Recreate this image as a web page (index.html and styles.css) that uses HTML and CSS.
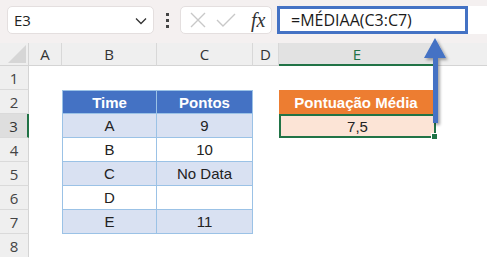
FILE: index.html
```html
<!DOCTYPE html>
<html lang="pt">

<head>
    <meta charset="UTF-8">
    <title>Planilha - MÉDIAA</title>
    <link rel="stylesheet" href="styles.css">
</head>

<body>
    <div class="window">
        <!-- barra de fórmulas -->
        <div class="toolbar">
            <div class="name-box">
                <span>E3</span>
                <svg class="chevron" width="12" height="8" viewBox="0 0 12 8"><path d="M1 1.5 L6 6.5 L11 1.5" fill="none" stroke="#333" stroke-width="1.3"/></svg>
            </div>
            <div class="grip"><i></i><i></i><i></i></div>
            <div class="fx-box">
                <svg width="18" height="18" viewBox="0 0 18 18"><path d="M2 2 L16 16 M16 2 L2 16" stroke="#c8c8c8" stroke-width="1.4"/></svg>
                <svg width="20" height="18" viewBox="0 0 20 18"><path d="M1 9 L7 15 L19 3" fill="none" stroke="#c8c8c8" stroke-width="1.4"/></svg>
                <span class="fx">fx</span>
            </div>
            <div class="formula">
                <div class="formula-text">=MÉDIAA(C3:C7)</div>
            </div>
        </div>

        <!-- grade da planilha -->
        <div class="sheet">
            <div class="corner"><svg width="18" height="18" viewBox="0 0 18 18"><path d="M18 0 L18 18 L0 18 Z" fill="#d6d6d6"/></svg></div>
            <div class="col-head">A</div>
            <div class="col-head">B</div>
            <div class="col-head">C</div>
            <div class="col-head">D</div>
            <div class="col-head active">E</div>
            <div class="col-head last"></div>

            <div class="row-head">1</div>
            <div class="cell"></div><div class="cell"></div><div class="cell"></div><div class="cell"></div><div class="cell"></div><div class="cell"></div>

            <div class="row-head">2</div>
            <div class="cell"></div>
            <div class="cell th first top">Time</div>
            <div class="cell th top">Pontos</div>
            <div class="cell"></div>
            <div class="cell orange-head">Pontuação Média</div>
            <div class="cell"></div>

            <div class="row-head active">3</div>
            <div class="cell"></div>
            <div class="cell td band first">A</div>
            <div class="cell td band">9</div>
            <div class="cell"></div>
            <div class="cell result">7,5<span class="handle"></span></div>
            <div class="cell"></div>

            <div class="row-head">4</div>
            <div class="cell"></div>
            <div class="cell td first">B</div>
            <div class="cell td">10</div>
            <div class="cell"></div><div class="cell"></div><div class="cell"></div>

            <div class="row-head">5</div>
            <div class="cell"></div>
            <div class="cell td band first">C</div>
            <div class="cell td band">No Data</div>
            <div class="cell"></div><div class="cell"></div><div class="cell"></div>

            <div class="row-head">6</div>
            <div class="cell"></div>
            <div class="cell td first">D</div>
            <div class="cell td"></div>
            <div class="cell"></div><div class="cell"></div><div class="cell"></div>

            <div class="row-head">7</div>
            <div class="cell"></div>
            <div class="cell td band first">E</div>
            <div class="cell td band">11</div>
            <div class="cell"></div><div class="cell"></div><div class="cell"></div>

            <div class="row-head">8</div>
            <div class="cell"></div><div class="cell"></div><div class="cell"></div><div class="cell"></div><div class="cell"></div><div class="cell"></div>
        </div>

        <!-- seta indicando a fórmula -->
        <svg class="arrow" width="40" height="100" viewBox="0 0 40 100">
            <defs>
                <filter id="sombra" x="-50%" y="-20%" width="200%" height="140%">
                    <feDropShadow dx="2" dy="2" stdDeviation="1.5" flood-color="#000" flood-opacity="0.35"/>
                </filter>
            </defs>
            <path d="M20 3 L31 23 L23 23 L23 88 L18 88 L18 23 L9 23 Z" fill="#4472c4" filter="url(#sombra)"/>
        </svg>
    </div>
</body>

</html>
```

FILE: styles.css
```css
/* base */

body {
    margin: 0;
    background: #ffffff;
    font-family: "Open Sans", "Noto Sans", sans-serif;
    color: #222;
}

.window {
    position: relative;
    width: 487px;
    height: 257px;
    overflow: hidden;
}

/* barra de fórmulas */

.toolbar {
    height: 43px;
    box-sizing: border-box;
    padding: 6px 0 9px 7px;
    display: flex;
    align-items: stretch;
    background-color: #f4f0f0;
}

.name-box {
    width: 147px;
    box-sizing: border-box;
    background: #fff;
    border: 1px solid #e4dfdf;
    border-radius: 5px;
    display: flex;
    align-items: center;
    justify-content: space-between;
    padding: 0 6px 0 6px;
    font-size: 15px;
}

.chevron {
    margin-top: 2px;
}

.grip {
    width: 26px;
    display: flex;
    flex-direction: column;
    align-items: center;
    justify-content: center;
    gap: 3px;
}

.grip i {
    width: 3px;
    height: 3px;
    background: #444;
}

.fx-box {
    width: 92px;
    box-sizing: border-box;
    background: #fff;
    border: 1px solid #e4dfdf;
    border-radius: 5px;
    display: flex;
    align-items: center;
    gap: 9px;
    padding: 0 0 0 8px;
}

.fx {
    font-family: "Liberation Serif", serif;
    font-style: italic;
    font-size: 20px;
    color: #333;
    margin-left: 6px;
}

.formula {
    flex: 1;
    margin-left: 5px;
    background: #fff;
    border-radius: 5px 0 0 5px;
    display: flex;
}

.formula-text {
    width: 191px;
    box-sizing: border-box;
    border: 3px solid #4472c4;
    padding: 0 0 0 11px;
    font-size: 16px;
    line-height: 22px;
    color: #1a1a1a;
}

/* grade */

.sheet {
    display: grid;
    grid-template-columns: 29px 33px 95px 96px 26px 157px 1fr;
    grid-template-rows: 23px repeat(8, 24px);
    font-family: "Liberation Sans", Arial, sans-serif;
}

.corner {
    background: #efefef;
    border-right: 1px solid #d4d4d4;
    border-bottom: 1px solid #d4d4d4;
    display: flex;
    align-items: flex-end;
    justify-content: flex-end;
    padding: 0 2px 2px 0;
}

.col-head {
    background: #efefef;
    border-right: 1px solid #d8d8d8;
    border-bottom: 1px solid #d4d4d4;
    display: flex;
    align-items: center;
    justify-content: center;
    font-family: "Open Sans", sans-serif;
    font-size: 15px;
    color: #333;
}

.col-head.active {
    background: #e2e2e2;
    color: #217346;
    border-bottom: 2px solid #217346;
}

.col-head.last {
    border-right: none;
}

.row-head {
    background: #efefef;
    border-right: 1px solid #d4d4d4;
    border-bottom: 1px solid #dadada;
    display: flex;
    align-items: center;
    justify-content: center;
    font-family: "Open Sans", sans-serif;
    font-size: 15px;
    color: #444;
}

.row-head.active {
    background: #dedede;
    border-right: 2px solid #217346;
    color: #333;
}

.cell {
    display: flex;
    align-items: center;
    justify-content: center;
    font-size: 15px;
    position: relative;
}

/* tabela azul */

.th {
    background: #4472c4;
    color: #fff;
    font-weight: bold;
    border-right: 1px solid #9bc2e6;
    border-bottom: 1px solid #9bc2e6;
}

.td {
    background: #fff;
    border-right: 1px solid #9bc2e6;
    border-bottom: 1px solid #9bc2e6;
}

.td.band {
    background: #d9e1f2;
}

.first {
    border-left: 1px solid #9bc2e6;
}

.top {
    border-top: 1px solid #9bc2e6;
}

/* resultado */

.orange-head {
    background: #ed7d31;
    color: #fff;
    font-weight: bold;
    margin-right: 3px;
}

.result {
    background: #fce4d6;
    border: 2px solid #217346;
}

.handle {
    position: absolute;
    right: -4px;
    bottom: -4px;
    width: 5px;
    height: 5px;
    background: #217346;
    border: 1px solid #fff;
}

.arrow {
    position: absolute;
    left: 415px;
    top: 35px;
}
```
